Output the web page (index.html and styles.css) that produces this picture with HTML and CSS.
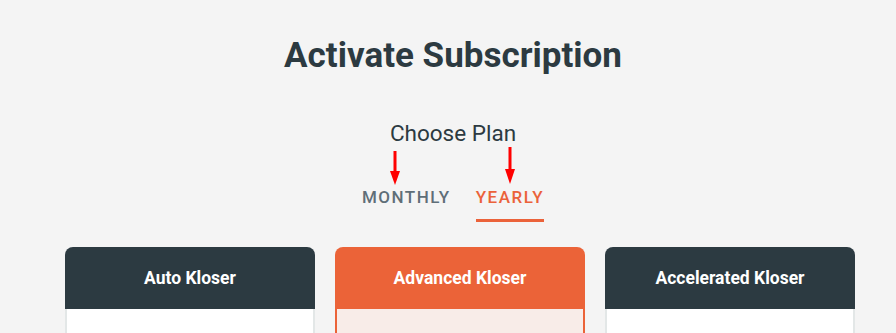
FILE: index.html
```html
<!DOCTYPE html>
<html>
<head>
<meta charset="utf-8">
<link rel="stylesheet" href="styles.css">
</head>
<body>
<div class="page">
  <h1 class="title">Activate Subscription</h1>
  <div class="subtitle">Choose Plan</div>
  <div class="tabs">
    <div class="tab">MONTHLY</div>
    <div class="tab active">YEARLY</div>
  </div>
  <div class="cards">
    <div class="card">
      <div class="card-head">Auto Kloser</div>
      <div class="card-body"></div>
    </div>
    <div class="card featured">
      <div class="card-head">Advanced Kloser</div>
      <div class="card-body"></div>
    </div>
    <div class="card">
      <div class="card-head">Accelerated Kloser</div>
      <div class="card-body"></div>
    </div>
  </div>
</div>
<svg class="arrow arrow-1" width="12" height="36" viewBox="0 0 12 36">
  <line x1="6" y1="0" x2="6" y2="24" stroke="#ff0000" stroke-width="3"/>
  <polygon points="1,20 11,20 6,34" fill="#ff0000"/>
</svg>
<svg class="arrow arrow-2" width="12" height="38" viewBox="0 0 12 38">
  <line x1="6" y1="0" x2="6" y2="26" stroke="#ff0000" stroke-width="3"/>
  <polygon points="1,22 11,22 6,37" fill="#ff0000"/>
</svg>
</body>
</html>
```

FILE: styles.css
```css
html, body {
  margin: 0;
  padding: 0;
  background: #f4f4f4;
  height: 100%;
  overflow: hidden;
}
body {
  font-family: Roboto, "Liberation Sans", sans-serif;
  color: #2c3a41;
  position: relative;
}
.page {
  padding: 0 0 0 10px;
  display: flex;
  flex-direction: column;
  align-items: center;
}
.title {
  margin: 34px 0 0;
  font-size: 35px;
  font-weight: 700;
  line-height: 44px;
  color: #2c3a41;
}
.subtitle {
  margin-top: 41px;
  font-size: 22.5px;
  line-height: 28px;
  color: #2c3a41;
}
.tabs {
  display: flex;
  gap: 25px;
  margin-top: 40px;
}
.tab {
  font-size: 17px;
  font-weight: 500;
  letter-spacing: 1.5px;
  line-height: 20px;
  color: #5f6e78;
  padding-bottom: 12px;
  border-bottom: 3px solid transparent;
}
.tab.active {
  color: #eb623a;
  border-bottom-color: #eb623a;
}
.cards {
  align-self: stretch;
  display: flex;
  gap: 20px;
  padding-left: 55px;
  margin-top: 25px;
}
.card {
  width: 250px;
  flex: none;
}
.card-head {
  height: 62px;
  background: #2c3a41;
  border-radius: 8px 8px 0 0;
  color: #ffffff;
  font-weight: 700;
  font-size: 17.5px;
  display: flex;
  align-items: center;
  justify-content: center;
}
.card-body {
  height: 80px;
  background: #ffffff;
  border: 2px solid #e3e7e7;
  border-top: none;
}
.featured .card-head {
  background: #eb6338;
}
.featured .card-body {
  background: #f8ece8;
  border-color: #eb6338;
}
.arrow {
  position: absolute;
}
.arrow-1 {
  left: 389px;
  top: 151px;
}
.arrow-2 {
  left: 504px;
  top: 147px;
}
```
